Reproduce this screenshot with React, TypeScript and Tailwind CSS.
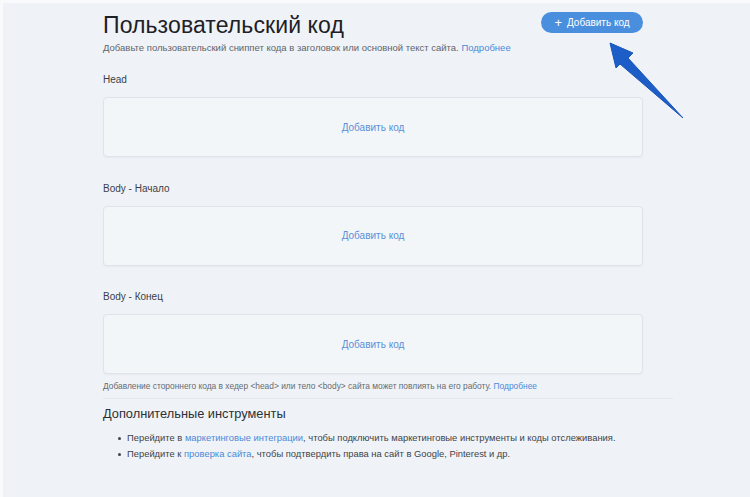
import React from "react";

function CodeBox({ label }: { label: string }) {
  return (
    <div className="flex flex-col">
      <div className="text-[10px] leading-[12px] text-[#3b3f45] h-[12px]">{label}</div>
      <div className="mt-[11px] h-[60px] rounded-[4px] border border-[#dfe4ea] bg-[#f3f6f9] shadow-[0_1px_2px_rgba(0,0,0,0.04)] flex items-center justify-center">
        <span className="text-[10px] text-[#5b8fd8]">Добавить код</span>
      </div>
    </div>
  );
}

export default function App() {
  return (
    <div
      className="relative w-[750px] h-[497px] overflow-hidden bg-[#eff3f7] border-t-[3px] border-l-[3px] border-[#f8fafc]"
      style={{ fontFamily: '"Liberation Sans", Arial, sans-serif' }}
    >
      <div className="ml-[100px] w-[540px] flex flex-col">
        <div className="flex items-start justify-between pt-[7px]">
          <div className="flex flex-col">
            <h1 className="text-[23px] leading-[30px] text-[#1d2026] tracking-[0.1px]">Пользовательский код</h1>
            <p className="mt-[2px] text-[9.5px] leading-[12px] text-[#5f646b]">
              Добавьте пользовательский сниппет кода в заголовок или основной текст сайта.{" "}
              <span className="text-[#4a8ad8]">Подробнее</span>
            </p>
          </div>
          <button className="mt-[2px] h-[21px] w-[102px] rounded-full bg-[#4a8fdd] text-white text-[10px] flex items-center justify-center gap-[5px]">
            <span className="text-[13px] leading-none font-light">+</span>
            <span>Добавить код</span>
          </button>
        </div>

        <div className="mt-[20px] flex flex-col gap-[25.5px]">
          <CodeBox label="Head" />
          <CodeBox label="Body - Начало" />
          <CodeBox label="Body - Конец" />
        </div>

        <p className="mt-[7px] text-[8.4px] leading-[10px] text-[#666b72]">
          Добавление стороннего кода в хедер &lt;head&gt; или тело &lt;body&gt; сайта может повлиять на его работу.{" "}
          <span className="text-[#4a8ad8]">Подробнее</span>
        </p>
        <div className="mt-[7px] h-px w-[570px] bg-[#e3e8ee]" />
        <h2 className="mt-[8px] text-[12.8px] leading-[14px] text-[#2c3036]">Дополнительные инструменты</h2>
        <ul className="mt-[11px] flex flex-col gap-[4px] pl-[15px] text-[9.4px] leading-[12px] text-[#3e4349]">
          <li className="flex items-center gap-[6px]">
            <span className="w-[3px] h-[3px] rounded-full bg-[#3e4349]" />
            <span>
              Перейдите в <span className="text-[#4a8ad8]">маркетинговые интеграции</span>, чтобы подключить маркетинговые инструменты и коды отслеживания.
            </span>
          </li>
          <li className="flex items-center gap-[6px]">
            <span className="w-[3px] h-[3px] rounded-full bg-[#3e4349]" />
            <span>
              Перейдите к <span className="text-[#4a8ad8]">проверка сайта</span>, чтобы подтвердить права на сайт в Google, Pinterest и др.
            </span>
          </li>
        </ul>
      </div>

      <svg className="absolute left-[-3px] top-[-3px]" width="750" height="497" viewBox="0 0 750 497">
        <polygon
          points="610,43 633,53 628,58 683,118 620,64 616,68"
          fill="#1c5dc7"
          stroke="#1a55b8"
          strokeWidth="1"
          strokeLinejoin="round"
        />
      </svg>
    </div>
  );
}
